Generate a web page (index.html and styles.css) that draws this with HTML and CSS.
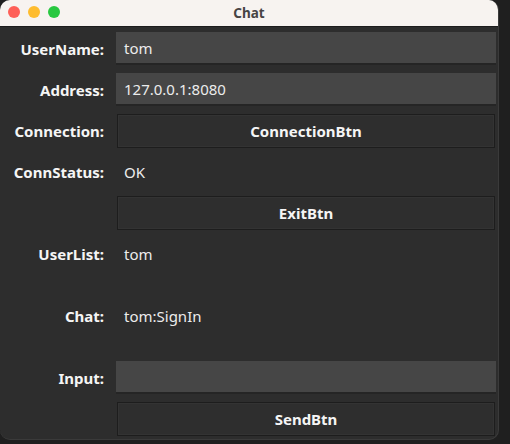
FILE: index.html
```html
<!DOCTYPE html>
<html>
<head>
<meta charset="utf-8">
<link rel="stylesheet" href="styles.css">
</head>
<body>
<div class="window">
  <div class="titlebar">
    <div class="lights">
      <span class="light red"></span>
      <span class="light yellow"></span>
      <span class="light green"></span>
    </div>
    <div class="title">Chat</div>
  </div>
  <div class="form">
    <div class="label">UserName:</div>
    <div class="cell"><div class="field">tom</div></div>

    <div class="label">Address:</div>
    <div class="cell"><div class="field">127.0.0.1:8080</div></div>

    <div class="label">Connection:</div>
    <div class="cell"><div class="btn">ConnectionBtn</div></div>

    <div class="label">ConnStatus:</div>
    <div class="cell"><div class="value">OK</div></div>

    <div class="label"></div>
    <div class="cell"><div class="btn">ExitBtn</div></div>

    <div class="label">UserList:</div>
    <div class="cell"><div class="value">tom</div></div>

    <div class="label">Chat:</div>
    <div class="cell"><div class="value">tom:SignIn</div></div>

    <div class="label">Input:</div>
    <div class="cell"><div class="field"></div></div>

    <div class="label"></div>
    <div class="cell"><div class="btn">SendBtn</div></div>
  </div>
</div>
</body>
</html>
```
FILE: styles.css
```css
html, body {
  margin: 0;
  padding: 0;
  background: #1f1f1f;
  width: 510px;
  height: 444px;
  overflow: hidden;
}
body {
  font-family: "Noto Sans", "Open Sans", sans-serif;
}
.window {
  width: 499px;
  height: 440px;
  background: #2d2d2d;
  border-radius: 10px;
  overflow: hidden;
  box-sizing: border-box;
  border-right: 1px solid #3a3a3a;
  border-bottom: 1px solid #3a3a3a;
}
.titlebar {
  height: 26px;
  background: #f7f3f0;
  border-bottom: 1px solid #1c1c1c;
  display: flex;
  align-items: center;
  justify-content: center;
  position: relative;
}
.lights {
  position: absolute;
  left: 8px;
  top: 6px;
  display: flex;
  gap: 8px;
}
.light {
  width: 12px;
  height: 12px;
  border-radius: 50%;
  display: block;
}
.red { background: #fe5f57; }
.yellow { background: #febc2e; }
.green { background: #28c840; }
.title {
  font-size: 13.5px;
  font-weight: bold;
  color: #474444;
}
.form {
  display: grid;
  grid-template-columns: 104px 380px;
  column-gap: 12px;
  grid-template-rows: 41px 41px 41px 41px 41px 41px 83px 41px 41px;
  padding-top: 1px;
}
.label {
  display: flex;
  align-items: center;
  justify-content: flex-end;
  font-size: 15px;
  font-weight: bold;
  color: #f5f5f5;
}
.cell {
  display: flex;
  align-items: center;
}
.field {
  width: 100%;
  height: 33px;
  box-sizing: border-box;
  background: #464646;
  border-bottom: 2px solid #252525;
  padding-left: 8px;
  display: flex;
  align-items: center;
  font-size: 15px;
  color: #ececec;
}
.btn {
  width: 378px;
  margin-left: 1px;
  height: 34px;
  box-sizing: border-box;
  background: #2e2e2e;
  border: 1px solid #1d1d1d;
  box-shadow: inset 0 0 0 1px #333333;
  display: flex;
  align-items: center;
  justify-content: center;
  font-size: 15px;
  font-weight: bold;
  color: #f5f5f5;
}
.value {
  padding-left: 8px;
  font-size: 15px;
  color: #ececec;
}
```
